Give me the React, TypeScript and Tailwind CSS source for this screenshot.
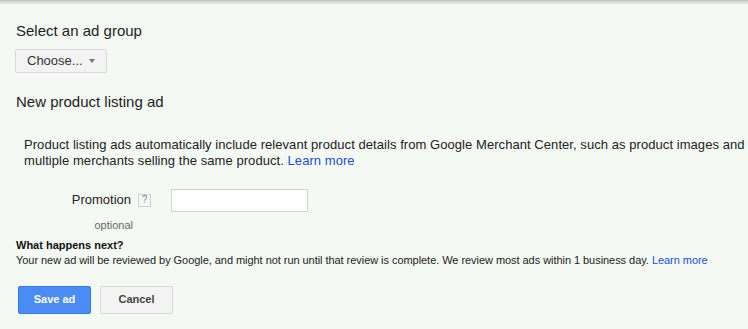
import type { FC } from "react";

const HelpIcon: FC = () => (
	<span className="inline-flex items-center justify-center w-[13px] h-[13px] border border-[#d0d0d0] bg-[#f6f6f6] text-[10px] leading-none text-[#888]">
		?
	</span>
);

const App: FC = () => (
	<div className="w-[748px] h-[329px] bg-[#f5f9f4] relative overflow-hidden font-['Liberation_Sans',Arial,sans-serif] text-[#222]">
		{/* top shadow */}
		<div className="h-[5px] bg-gradient-to-b from-[#bfc4bd] to-[#f5f9f4]" />

		<div className="pl-[16px]">
			{/* Ad group */}
			<h2 className="text-[15px] leading-[18px] mt-[17px]">Select an ad group</h2>
			<button className="mt-[9px] -ml-px h-[24px] px-[11px] flex items-center gap-[6px] text-[13px] text-[#333] bg-[#f3f3f3] border border-[#d9d9d9] rounded-[2px]">
				Choose...
				<span className="w-0 h-0 border-l-[3.5px] border-r-[3.5px] border-t-[4px] border-l-transparent border-r-transparent border-t-[#777]" />
			</button>

			<h2 className="text-[15px] leading-[18px] mt-[20px]">New product listing ad</h2>

			{/* Description */}
			<p className="mt-[26px] ml-[8px] text-[13px] leading-[16px] tracking-[0.06px] whitespace-nowrap">
				Product listing ads automatically include relevant product details from Google Merchant Center, such as product images and
				<br />
				multiple merchants selling the same product.{" "}
				<a className="text-[#1a4ed8] cursor-pointer">Learn more</a>
			</p>

			{/* Promotion field */}
			<div className="mt-[20px] flex items-start">
				<div className="w-[155px] flex flex-col items-end pr-[20px]">
					<div className="flex items-center gap-[7px] h-[22px]">
						<span className="text-[13px]">Promotion</span>
						<HelpIcon />
					</div>
					<span className="text-[11px] text-[#666] mt-[6px] mr-[18px]">optional</span>
				</div>
				<input
					type="text"
					className="w-[137px] h-[23px] bg-white border border-[#d2d2d2] outline-none"
				/>
			</div>

			{/* Next steps */}
			<div className="mt-[4px] text-[11px] leading-[14px]">
				<div className="font-bold text-[#111]">What happens next?</div>
				<div className="mt-[1px] tracking-[-0.05px]">
					Your new ad will be reviewed by Google, and might not run until that review is complete. We review most ads within 1 business day.{" "}
					<a className="text-[#1a4ed8] cursor-pointer">Learn more</a>
				</div>
			</div>

			{/* Actions */}
			<div className="mt-[19px] ml-[2px] flex gap-[9px]">
				<button className="w-[73px] h-[28px] text-[11px] font-bold text-white bg-[#4b8bf4] border border-[#3079ed] rounded-[2px]">
					Save ad
				</button>
				<button className="w-[73px] h-[28px] text-[11px] font-bold text-[#444] bg-[#f3f3f3] border border-[#d9d9d9] rounded-[2px]">
					Cancel
				</button>
			</div>
		</div>
	</div>
);

export default App;
